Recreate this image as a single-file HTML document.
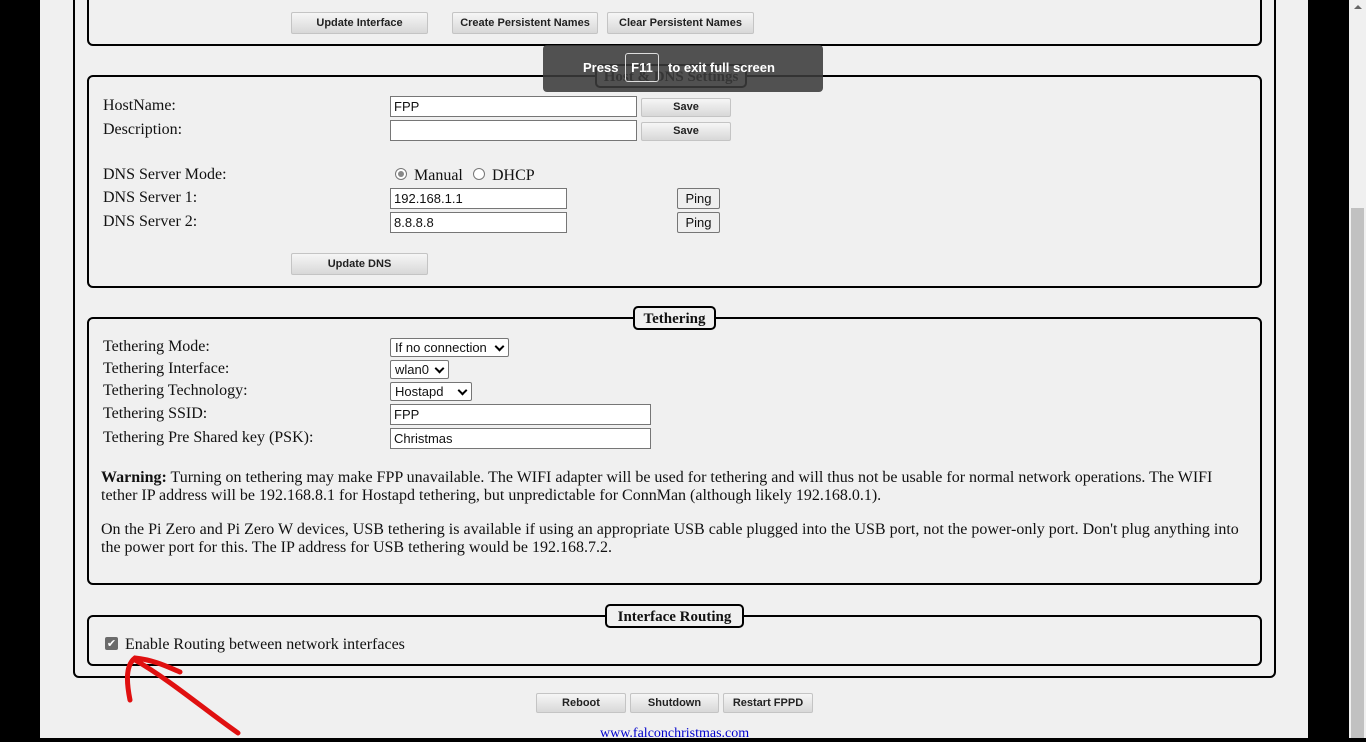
<!DOCTYPE html>
<html><head><style>
body{margin:0;width:1366px;height:738px;overflow:hidden;background:#000;position:relative;font-family:"Liberation Serif",serif;font-size:16px;color:#111}
.a{position:absolute}
#pg{left:40px;top:0;width:1268px;height:738px;background:#f0f0f0}
#sb{left:1349px;top:0;width:17px;height:738px;background:#f0f0f0}
.box{position:absolute;border:2px solid #000;border-radius:6px;box-sizing:border-box}
.lg{position:absolute;border:2px solid #000;border-radius:5px;background:#f0f0f0;font-weight:bold;font-size:15px;height:24px;line-height:22px;box-sizing:border-box;white-space:nowrap;text-align:center}
.btn{position:absolute;height:22px;box-sizing:border-box;border:1px solid #c4c4c4;border-radius:2px;background:linear-gradient(#f6f6f6,#d8d8d8);font-family:"Liberation Sans",sans-serif;font-weight:bold;font-size:11px;text-align:center;line-height:20px;color:#222}
.in{position:absolute;height:21px;box-sizing:border-box;border:1px solid #767676;background:#fff;font-family:"Liberation Sans",sans-serif;font-size:13px;line-height:19px;padding-left:3px}
.sel{position:absolute;height:19px;box-sizing:border-box;border:1px solid #767676;background:#fff;font-family:"Liberation Sans",sans-serif;font-size:13px;line-height:17px;padding-left:4px;border-radius:2px}
.sel:after{content:"";position:absolute;right:5px;top:4px;width:5px;height:5px;border-right:2px solid #000;border-bottom:2px solid #000;transform:rotate(45deg)}
.ping{position:absolute;height:21px;width:43px;box-sizing:border-box;border:1px solid #767676;border-radius:2px;background:#efefef;font-family:"Liberation Sans",sans-serif;font-size:13px;text-align:center;line-height:19px}
.t{position:absolute;white-space:nowrap}
</style></head><body>
<div class="a" id="pg"></div>
<div class="a" id="sb"><div class="a" style="left:2px;top:208px;width:13px;height:530px;background:#c1c1c1"></div><div class="a" style="left:5px;top:5px;width:0;height:0;border-left:4px solid transparent;border-right:4px solid transparent;border-bottom:4px solid #666"></div></div>

<div class="box" style="left:73px;top:-10px;width:1203px;height:688px"></div>

<div class="box" style="left:87px;top:-10px;width:1175px;height:56px"></div>
<div class="btn" style="left:291px;top:12px;width:137px">Update Interface</div>
<div class="btn" style="left:452px;top:12px;width:146px">Create Persistent Names</div>
<div class="btn" style="left:607px;top:12px;width:147px">Clear Persistent Names</div>

<div class="box" style="left:87px;top:75px;width:1175px;height:213px"></div>
<div class="lg" style="left:595px;top:64px;width:152px">Host &amp; DNS Settings</div>
<div class="t" style="left:103px;top:97px">HostName:</div>
<div class="t" style="left:103px;top:121px">Description:</div>
<div class="in" style="left:390px;top:96px;width:247px">FPP</div>
<div class="in" style="left:390px;top:120px;width:247px"></div>
<div class="btn" style="left:641px;top:98px;width:90px;height:19px;line-height:17px">Save</div>
<div class="btn" style="left:641px;top:122px;width:90px;height:19px;line-height:17px">Save</div>
<div class="t" style="left:103px;top:166px">DNS Server Mode:</div>
<div class="a" style="left:395px;top:168px;width:12px;height:12px;border:1px solid #777;border-radius:50%;box-sizing:border-box;background:#fff"><div class="a" style="left:2px;top:2px;width:6px;height:6px;border-radius:50%;background:#888"></div></div>
<div class="t" style="left:414px;top:167px">Manual</div>
<div class="a" style="left:473px;top:168px;width:12px;height:12px;border:1px solid #777;border-radius:50%;box-sizing:border-box;background:#fff"></div>
<div class="t" style="left:492px;top:167px">DHCP</div>
<div class="t" style="left:103px;top:189px">DNS Server 1:</div>
<div class="t" style="left:103px;top:213px">DNS Server 2:</div>
<div class="in" style="left:390px;top:188px;width:177px">192.168.1.1</div>
<div class="in" style="left:390px;top:212px;width:177px">8.8.8.8</div>
<div class="ping" style="left:677px;top:188px">Ping</div>
<div class="ping" style="left:677px;top:212px">Ping</div>
<div class="btn" style="left:291px;top:253px;width:137px">Update DNS</div>

<div class="a" style="left:543px;top:45px;width:280px;height:47px;background:rgba(58,58,58,.88);border-radius:4px"></div>
<div class="t" style="left:583px;top:60px;color:#fff;font-family:'Liberation Sans',sans-serif;font-weight:bold;font-size:13px">Press</div>
<div class="a" style="left:625px;top:53px;width:34px;height:29px;border:1px solid #ddd;border-radius:3px;box-sizing:border-box;color:#fff;font-family:'Liberation Sans',sans-serif;font-weight:bold;font-size:13px;text-align:center;line-height:27px">F11</div>
<div class="t" style="left:668px;top:60px;color:#fff;font-family:'Liberation Sans',sans-serif;font-weight:bold;font-size:13px">to exit full screen</div>

<div class="box" style="left:87px;top:317px;width:1175px;height:268px"></div>
<div class="lg" style="left:633px;top:306px;width:83px">Tethering</div>
<div class="t" style="left:103px;top:338px">Tethering Mode:</div>
<div class="t" style="left:103px;top:360px">Tethering Interface:</div>
<div class="t" style="left:103px;top:382px">Tethering Technology:</div>
<div class="t" style="left:103px;top:405px">Tethering SSID:</div>
<div class="t" style="left:103px;top:429px">Tethering Pre Shared key (PSK):</div>
<div class="sel" style="left:390px;top:338px;width:119px">If no connection</div>
<div class="sel" style="left:390px;top:360px;width:59px">wlan0</div>
<div class="sel" style="left:390px;top:382px;width:82px">Hostapd</div>
<div class="in" style="left:390px;top:404px;width:261px">FPP</div>
<div class="in" style="left:390px;top:428px;width:261px">Christmas</div>
<div class="a" style="left:101px;top:469px;width:1125px;line-height:18px"><b>Warning:</b> Turning on tethering may make FPP unavailable. The WIFI adapter will be used for tethering and will thus not be usable for normal network operations. The WIFI tether IP address will be 192.168.8.1 for Hostapd tethering, but unpredictable for ConnMan (although likely 192.168.0.1).</div>
<div class="a" style="left:101px;top:521px;width:1145px;line-height:18px">On the Pi Zero and Pi Zero W devices, USB tethering is available if using an appropriate USB cable plugged into the USB port, not the power-only port. Don't plug anything into the power port for this. The IP address for USB tethering would be 192.168.7.2.</div>

<div class="box" style="left:87px;top:615px;width:1175px;height:51px"></div>
<div class="lg" style="left:605px;top:604px;width:139px">Interface Routing</div>
<div class="a" style="left:105px;top:637px;width:13px;height:13px;background:#6b6b6b;border-radius:2px;color:#fff;font-size:11px;line-height:13px;text-align:center;font-family:'DejaVu Sans',sans-serif">✔</div>
<div class="t" style="left:125px;top:636px">Enable Routing between network interfaces</div>

<div class="btn" style="left:536px;top:693px;width:90px;height:20px;line-height:18px">Reboot</div>
<div class="btn" style="left:630px;top:693px;width:89px;height:20px;line-height:18px">Shutdown</div>
<div class="btn" style="left:723px;top:693px;width:90px;height:20px;line-height:18px">Restart FPPD</div>
<div class="t" style="left:600px;top:726px;color:#00c;font-size:14px">www.falconchristmas.com</div>

<svg class="a" style="left:0;top:0" width="1366" height="738"><path d="M130 700 C126 680 126 665 135 658 C155 660 170 668 180 672 M135 660 C170 680 205 710 238 733" fill="none" stroke="#e01010" stroke-width="5" stroke-linecap="round"/></svg>
</body></html>
